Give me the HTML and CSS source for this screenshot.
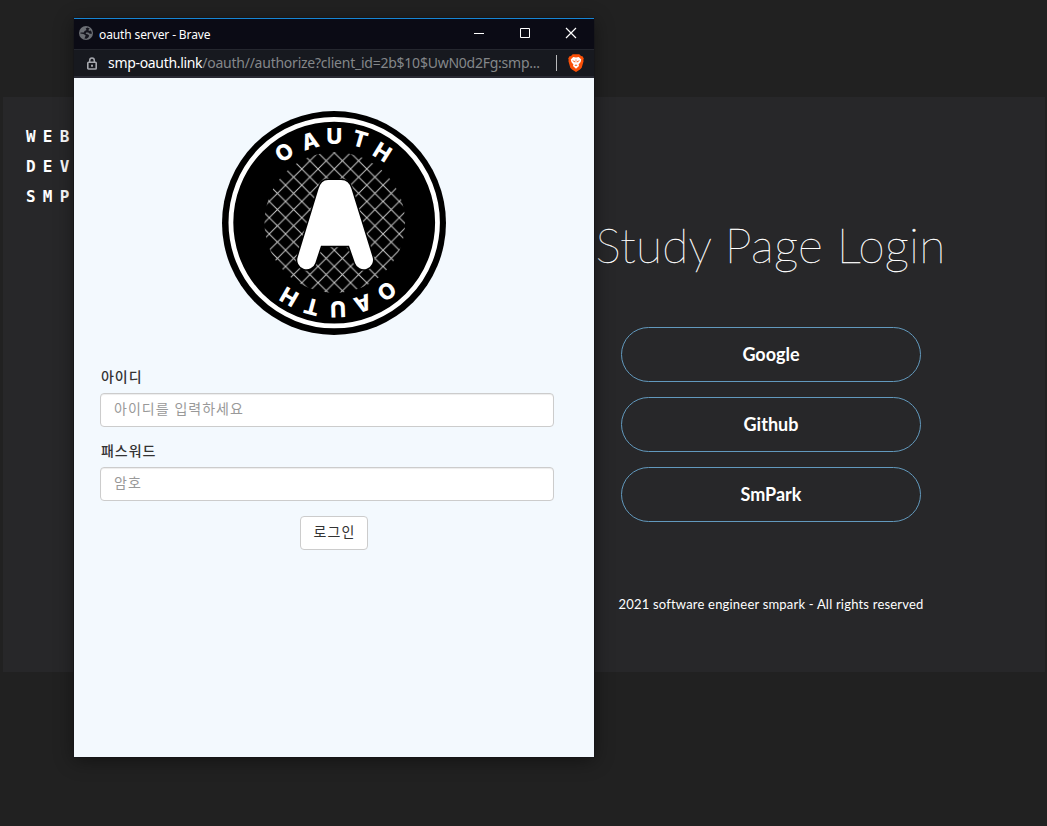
FILE: index.html
```html
<!DOCTYPE html>
<html lang="ko">
<head>
<meta charset="utf-8">
<title>Study Page Login</title>
<link rel="stylesheet" href="styles.css">
</head>
<body>
<main class="page">
  <div class="brand"><span>WEB</span><span>DEV</span><span>SMP</span></div>
  <section class="login">
    <h1 class="title">Study Page Login</h1>
    <nav class="providers">
      <a class="provider google">Google</a>
      <a class="provider github">Github</a>
      <a class="provider smpark">SmPark</a>
    </nav>
    <footer class="copyright">2021 software engineer smpark - All rights reserved</footer>
  </section>
</main>

<div class="window">
  <header class="titlebar">
    <svg class="globe" width="14" height="14" viewBox="0 0 14 14"><circle cx="7" cy="7" r="7" fill="#6b6e74"/><path d="M8.3 1.5 6.7 2.6 7.5 4 5.6 4.9 4.7 6.5H1.6L1.3 7.6 4.4 8 6.6 9.2 6.2 10.8 5.4 12.4 7.5 12.7 9.3 11.6 10.2 9.8 9.1 8.4 6.7 7.7 7.1 6.5 9.3 6.4 10.3 7.5 12.6 7.9 12.7 6.2 11.8 4.6 9.9 4.9 9.5 3.8 10.7 2.5Z" fill="#15151e"/></svg>
    <span class="caption">oauth server - Brave</span>
    <div class="controls">
      <svg width="12" height="12" viewBox="0 0 12 12"><path d="M1 6.5H11" stroke="#fff" fill="none"/></svg>
      <svg width="12" height="12" viewBox="0 0 12 12"><path d="M1.5 1.5H10.5V10.5H1.5Z" stroke="#fff" fill="none"/></svg>
      <svg width="12" height="12" viewBox="0 0 12 12"><path d="M1 1 11 11M11 1 1 11" stroke="#fff" stroke-width="1.2" fill="none"/></svg>
    </div>
  </header>
  <div class="address">
    <svg class="lock" width="10" height="13" viewBox="0 0 10 13"><path d="M2.7 6V3.4a2.3 2.3 0 0 1 4.6 0V6" fill="none" stroke="#a5a7ad" stroke-width="1.5"/><rect x=".8" y="5.3" width="8.4" height="6.7" rx=".7" fill="none" stroke="#a5a7ad" stroke-width="1.6"/><rect x="4" y="7.7" width="2" height="2" fill="#a5a7ad"/></svg>
    <div class="url"><span class="host">smp-oauth.link</span><span class="path">/oauth//authorize?client_id=2b$10$UwN0d2Fg:smp...</span></div>
    <i class="divider"></i>
    <svg class="brave" width="16" height="18" viewBox="0 0 16 18"><path d="M4.7.3H11.3L13 2 14.5 2.2 15.8 4.5 15.3 6 15.6 7 13.7 13.7 12 15.6 8 18 4 15.6 2.3 13.7.4 7 .7 6 .2 4.5 1.5 2.2 3 2Z" fill="#fb5007"/><path d="M5.2 3 8 3.4 10.8 3 13.2 5.6 12.6 8 10.6 10.4 11 12 8 14.7 5 12 5.4 10.4 3.4 8 2.8 5.6Z" fill="#fff"/><path d="M4 6.2 6.7 7 7 8.6 5.5 7.6ZM12 6.2 9.3 7 9 8.6 10.5 7.6ZM6.4 11.2 8 10.4 9.6 11.2 8 12.1ZM7.7 5.2H8.3V8.6H7.7Z" fill="#fb5007"/></svg>
  </div>
  <div class="content">
    <svg class="logo" width="224" height="224" viewBox="0 0 224 224">
      <defs>
        <pattern id="mesh" x="112.3" y="41.7" width="16.25" height="16.25" patternUnits="userSpaceOnUse"><path d="M-1-1 17.25 17.25M17.25-1-1 17.25" stroke="#c8c8c8" stroke-width="1"/></pattern>
      </defs>
      <circle cx="112" cy="112" r="112"/>
      <circle cx="112.2" cy="111.6" r="103.3" fill="none" stroke="#fff" stroke-width="4.8"/>
      <circle cx="112.8" cy="111.5" r="70.3" fill="url(#mesh)"/>
      <path d="M106 69H119Q127 69 129.5 78L150.5 146A9.2 9.2 0 0 1 133 152L127 134.7H99L93.3 152A9.2 9.2 0 0 1 75.8 146L96.5 78Q99 69 106 69Z" fill="#fff" stroke="#000" stroke-width="3" paint-order="stroke"/>
      <g class="ring-text">
        <text transform="translate(62.3 41.3) rotate(-35)" y="7.8">O</text>
        <text transform="translate(88 30) rotate(-17)" y="7.8">A</text>
        <text transform="translate(112.3 25)" y="7.8">U</text>
        <text transform="translate(138 28.3) rotate(16)" y="7.8">T</text>
        <text transform="translate(160.3 41.3) rotate(32)" y="7.8">H</text>
        <text transform="translate(164.7 180) rotate(143)" y="7.8">O</text>
        <text transform="translate(140.7 192.3) rotate(161)" y="7.8">A</text>
        <text transform="translate(116 198) rotate(178)" y="7.8">U</text>
        <text transform="translate(89.7 195.7) rotate(195)" y="7.8">T</text>
        <text transform="translate(67.3 185.7) rotate(210)" y="7.8">H</text>
      </g>
    </svg>
    <form class="form">
      <label for="user">아이디</label>
      <input id="user" type="text" placeholder="아이디를 입력하세요">
      <label for="pass">패스워드</label>
      <input id="pass" type="password" placeholder="암호">
      <button type="button">로그인</button>
    </form>
  </div>
</div>
</body>
</html>
```
FILE: styles.css
```css
* { box-sizing: border-box; }
body {
  margin: 0;
  height: 826px;
  overflow: hidden;
  padding: 97px 2px 0 3px;
  background: #212121;
  font-family: "Noto Sans", "Noto Sans CJK KR", sans-serif;
}
.page {
  height: 575px;
  background: #272729;
  display: flex;
  justify-content: space-between;
  color: #fff;
}
.brand {
  display: flex;
  flex-direction: column;
  padding: 25px 0 0 23px;
  font: bold 16px/30px "DejaVu Sans Mono", monospace;
  letter-spacing: 7.2px;
}
.login {
  width: 400px;
  margin-right: 74px;
  padding-top: 118px;
  display: flex;
  flex-direction: column;
  align-items: center;
  font-family: Lato, sans-serif;
}
.title {
  margin: 0 0 0 -1px;
  font-size: 48px;
  line-height: 60px;
  font-weight: 100;
  letter-spacing: .2px;
  -webkit-text-stroke: .35px #fff;
  white-space: nowrap;
}
.providers {
  margin-top: 52px;
  display: flex;
  flex-direction: column;
  gap: 15px;
}
.provider {
  width: 300px;
  height: 55px;
  border: 1px solid #6299bd;
  border-radius: 28px;
  font-size: 18px;
  font-weight: 700;
  line-height: 53px;
  text-align: center;
}
.copyright {
  margin-top: 72px;
  font-size: 13px;
  line-height: 20px;
  letter-spacing: .2px;
  white-space: nowrap;
}
.window {
  position: absolute;
  left: 74px;
  top: 18px;
  width: 520px;
  height: 739px;
  display: flex;
  flex-direction: column;
  background: #f3f9fe;
  box-shadow: 0 3px 18px rgba(0, 0, 0, .45), 0 0 0 1px #1d1d20;
}
.titlebar {
  height: 31px;
  border-top: 1px solid #1685d3;
  background: #0b0b15;
  display: flex;
  align-items: center;
  padding: 0 17px 0 5px;
  color: #fff;
}
.caption {
  margin: 0 0 0 6px;
  font-size: 12px;
  letter-spacing: -.12px;
}
.globe { margin-top: -2px; }
.controls {
  margin: -2px 0 0 auto;
  display: flex;
  gap: 34px;
}
.address {
  height: 29px;
  border-top: 1px solid #25272f;
  border-bottom: 2px solid #292a34;
  background: #17191f;
  display: flex;
  align-items: center;
  padding: 0 10px 0 13px;
}
.url {
  width: 440px;
  margin: -2px 0 0 11px;
  font-size: 14px;
  white-space: nowrap;
  color: #84878a;
}
.host {
  color: #fff;
  letter-spacing: -.32px;
}
.path { letter-spacing: -.24px; }
.divider {
  width: 1px;
  height: 16px;
  margin-left: 8px;
  background: #b8b9bb;
}
.brave { margin-left: 11px; }
.content {
  flex: 1;
  padding: 33px 26px 0;
  display: flex;
  flex-direction: column;
}
.logo { margin-left: 122px; }
.ring-text {
  font: 800 22px Inter, sans-serif;
  fill: #fff;
  text-anchor: middle;
}
.form {
  margin-top: 32px;
  width: 468px;
  display: flex;
  flex-direction: column;
  font-size: 14px;
}
.form label {
  height: 20px;
  margin-bottom: 6px;
  padding-left: 1px;
  line-height: 20px;
  font-weight: 500;
  letter-spacing: .95px;
  color: #333;
}
.form input {
  width: 454px;
  height: 34px;
  margin: 0 0 14px;
  padding: 4px 12px 8px 13px;
  border: 1px solid #ccc;
  border-radius: 4px;
  background: #fff;
  box-shadow: inset 0 1px 1px rgba(0, 0, 0, .075);
  font: 14px "Noto Sans CJK KR", sans-serif;
  letter-spacing: 1px;
}
.form input::placeholder { color: #999; }
.form button {
  align-self: center;
  width: 68px;
  height: 34px;
  margin-top: 1px;
  padding: 0 0 4px 1px;
  border: 1px solid #ccc;
  border-radius: 4px;
  background: #fff;
  font: 14px "Noto Sans CJK KR", sans-serif;
  letter-spacing: 1.1px;
  color: #333;
}
```
